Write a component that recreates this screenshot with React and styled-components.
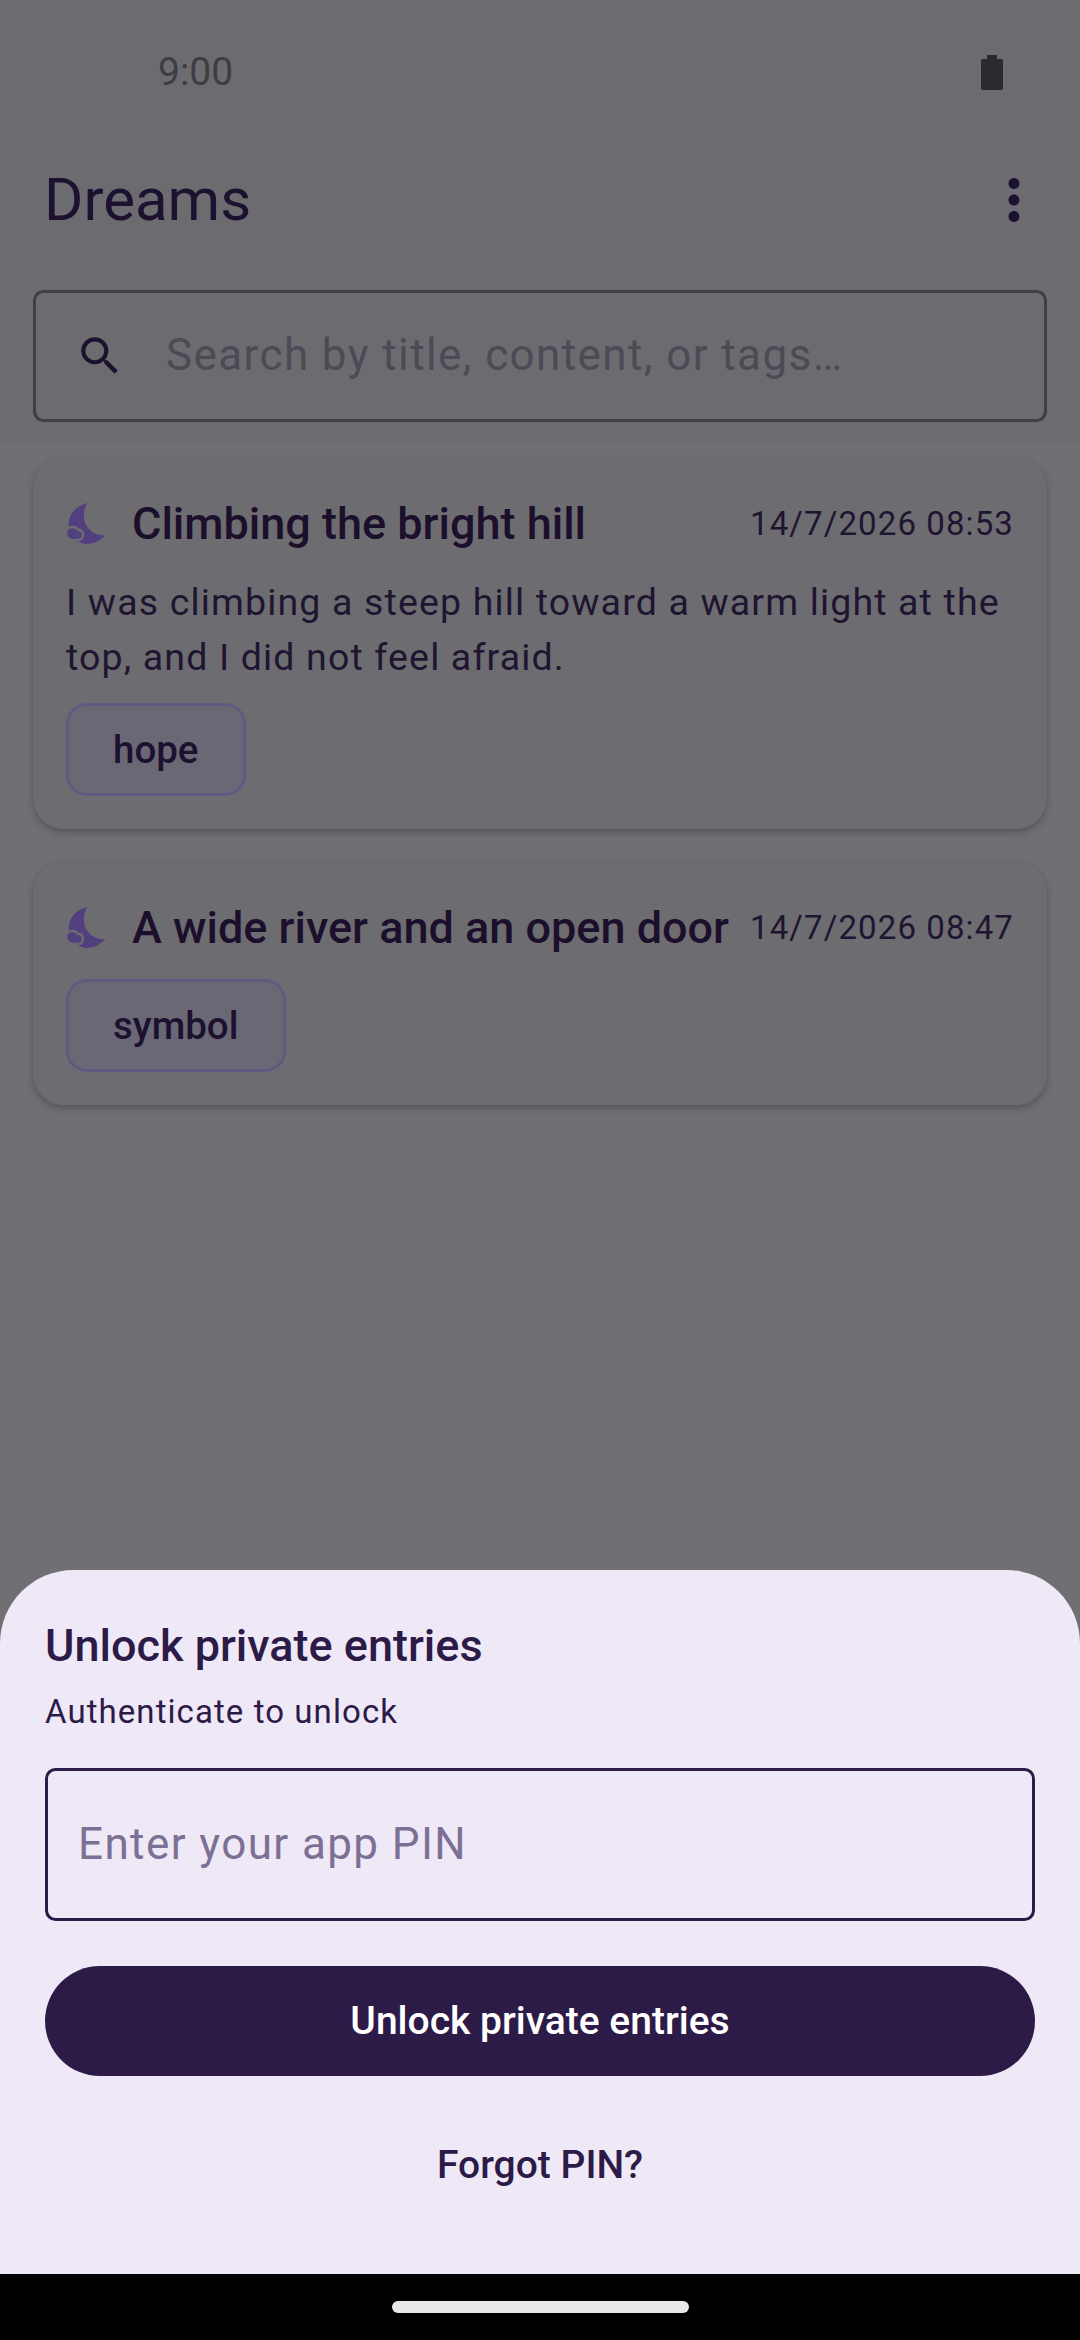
import React from 'react';
import styled, { createGlobalStyle } from 'styled-components';
import { MdSearch, MdMoreVert } from 'react-icons/md';

const GlobalStyle = createGlobalStyle`
  html, body {
    margin: 0;
    padding: 0;
    background: #706f74;
  }
  * {
    box-sizing: border-box;
  }
`;

const Screen = styled.div`
  width: 1080px;
  height: 2340px;
  display: flex;
  flex-direction: column;
  overflow: hidden;
  background: #706f74;
  font-family: Roboto, 'Noto Sans', sans-serif;
`;

const Backdrop = styled.div`
  flex: 1;
  min-height: 0;
`;

const Header = styled.header`
  height: 443px;
  background: #6c6b70;
`;

const StatusBar = styled.div`
  height: 144px;
  padding: 0 77px 0 158px;
  display: flex;
  align-items: center;
  justify-content: space-between;
`;

const Clock = styled.span`
  font-size: 39px;
  color: #3f3d42;
`;

const TitleRow = styled.div`
  height: 112px;
  padding: 0 33px 0 44px;
  display: flex;
  align-items: center;
  justify-content: space-between;
`;

const PageTitle = styled.h1`
  margin: 0 0 2px;
  font-size: 60px;
  font-weight: 400;
  color: #1d1130;
`;

const MenuIcon = styled(MdMoreVert)`
  width: 66px;
  height: 66px;
  color: #1d1130;
`;

const SearchBox = styled.div`
  margin: 34px 33px 0 33px;
  height: 132px;
  padding-left: 39px;
  display: flex;
  align-items: center;
  gap: 41px;
  border: 3px solid #403e45;
  border-radius: 10.5px;
`;

const SearchIcon = styled(MdSearch)`
  width: 50px;
  height: 50px;
  color: #1d1130;
`;

const SearchHint = styled.span`
  margin-bottom: 2px;
  font-size: 44px;
  letter-spacing: 1.4px;
  color: #4c4a55;
`;

const EntryList = styled.div`
  padding: 15px 33px 0;
  display: flex;
  flex-direction: column;
  gap: 33px;
`;

const EntryCard = styled.article`
  padding: 33px;
  display: flex;
  flex-direction: column;
  gap: 18px;
  background: #6d6c71;
  border-radius: 31px;
  box-shadow: 0 3px 7px rgba(30, 25, 40, 0.32);
`;

const EntryHead = styled.div`
  height: 65.5px;
  display: flex;
  align-items: center;
`;

const MoonMark = styled.svg`
  width: 40px;
  height: 41px;
  flex: none;
  margin-right: 26px;
`;

const EntryTitle = styled.h2`
  margin: 0;
  flex: 1;
  min-width: 0;
  font-size: 45px;
  font-weight: 500;
  white-space: nowrap;
  color: #1b0f2c;
`;

const EntryDate = styled.span`
  flex: none;
  font-size: 33px;
  letter-spacing: 1.1px;
  white-space: nowrap;
  color: #201530;
`;

const EntryBody = styled.p`
  margin: 0;
  font-size: 37.5px;
  line-height: 55.25px;
  letter-spacing: 1.15px;
  color: #201530;
`;

const Tag = styled.span`
  align-self: flex-start;
  height: 93px;
  padding: 0 44px;
  display: flex;
  align-items: center;
  font-size: 38.5px;
  font-weight: 500;
  color: #1d1130;
  background: #6a6875;
  border: 3px solid #5f5a80;
  border-radius: 21px;
`;

const Sheet = styled.section`
  height: 704px;
  padding: 0 45px;
  display: flex;
  flex-direction: column;
  background: #efe9f7;
  border-radius: 73.5px 73.5px 0 0;
`;

const SheetTitle = styled.h2`
  margin: 48px 0 0;
  height: 55px;
  line-height: 55px;
  font-size: 45px;
  font-weight: 500;
  color: #2d1b47;
`;

const SheetHint = styled.p`
  margin: 18px 0 0;
  height: 42px;
  line-height: 42px;
  font-size: 33px;
  letter-spacing: 1.07px;
  color: #2d1b47;
`;

const PinField = styled.div`
  margin-top: 35px;
  height: 153px;
  padding: 0 0 2px 30px;
  display: flex;
  align-items: center;
  font-size: 44px;
  letter-spacing: 1.4px;
  color: #7c7094;
  border: 3px solid #2d1b47;
  border-radius: 10.5px;
`;

const UnlockButton = styled.button`
  margin-top: 45px;
  height: 110px;
  border: 0;
  border-radius: 55px;
  font-family: inherit;
  font-size: 39px;
  font-weight: 500;
  color: #ffffff;
  background: #2d1b47;
`;

const ForgotLink = styled.button`
  margin-top: 59px;
  height: 60px;
  border: 0;
  font-family: inherit;
  font-size: 39px;
  font-weight: 500;
  color: #2d1b47;
  background: transparent;
`;

const NavBar = styled.div`
  height: 66px;
  display: flex;
  justify-content: center;
  padding-top: 27px;
  background: #000000;
`;

const HomePill = styled.div`
  width: 297px;
  height: 12px;
  border-radius: 6px;
  background: #e8e8e8;
`;

const Moon = () => (
  <MoonMark viewBox="0 0 40 41">
    <path
      d="M21.3 0C11 2.500 3 10 2.700 21 3 33 12 41 21 41c8 0 14-4 18.300-8.700C28 33 19 25 18 15c-.5-6 1-11 3.300-15z"
      fill="#523f7e"
    />
    <path
      d="M6 24c-3.500 0-6 2.800-6 6.300S2.800 37 6.500 37h5c3.200 0 5.500-2.300 5.500-5.200 0-2.800-2-4.800-4.800-5C11 25 9 24 6 24z"
      fill="#523f7e"
      stroke="#6d6c71"
      strokeWidth="2.500"
    />
  </MoonMark>
);

const Battery = () => (
  <svg width="22" height="35" viewBox="0 0 22 35">
    <path
      d="M6 0h10v4h4.500c.8 0 1.500.7 1.500 1.500v28c0 .8-.7 1.500-1.500 1.500h-19C.7 35 0 34.300 0 33.500v-28C0 4.700.7 4 1.500 4H6z"
      fill="#2b2a2d"
    />
  </svg>
);

const entries = [
  {
    title: 'Climbing the bright hill',
    date: '14/7/2026 08:53',
    body: 'I was climbing a steep hill toward a warm light at the top, and I did not feel afraid.',
    tag: 'hope',
  },
  {
    title: 'A wide river and an open door',
    date: '14/7/2026 08:47',
    tag: 'symbol',
  },
];

export default function App() {
  return (
    <Screen>
      <GlobalStyle />
      <Backdrop>
        <Header>
          <StatusBar>
            <Clock>9:00</Clock>
            <Battery />
          </StatusBar>
          <TitleRow>
            <PageTitle>Dreams</PageTitle>
            <MenuIcon />
          </TitleRow>
          <SearchBox>
            <SearchIcon />
            <SearchHint>Search by title, content, or tags…</SearchHint>
          </SearchBox>
        </Header>
        <EntryList>
          {entries.map(entry => (
            <EntryCard key={entry.title}>
              <EntryHead>
                <Moon />
                <EntryTitle>{entry.title}</EntryTitle>
                <EntryDate>{entry.date}</EntryDate>
              </EntryHead>
              {entry.body && <EntryBody>{entry.body}</EntryBody>}
              <Tag>{entry.tag}</Tag>
            </EntryCard>
          ))}
        </EntryList>
      </Backdrop>
      <Sheet>
        <SheetTitle>Unlock private entries</SheetTitle>
        <SheetHint>Authenticate to unlock</SheetHint>
        <PinField>Enter your app PIN</PinField>
        <UnlockButton>Unlock private entries</UnlockButton>
        <ForgotLink>Forgot PIN?</ForgotLink>
      </Sheet>
      <NavBar>
        <HomePill />
      </NavBar>
    </Screen>
  );
}
